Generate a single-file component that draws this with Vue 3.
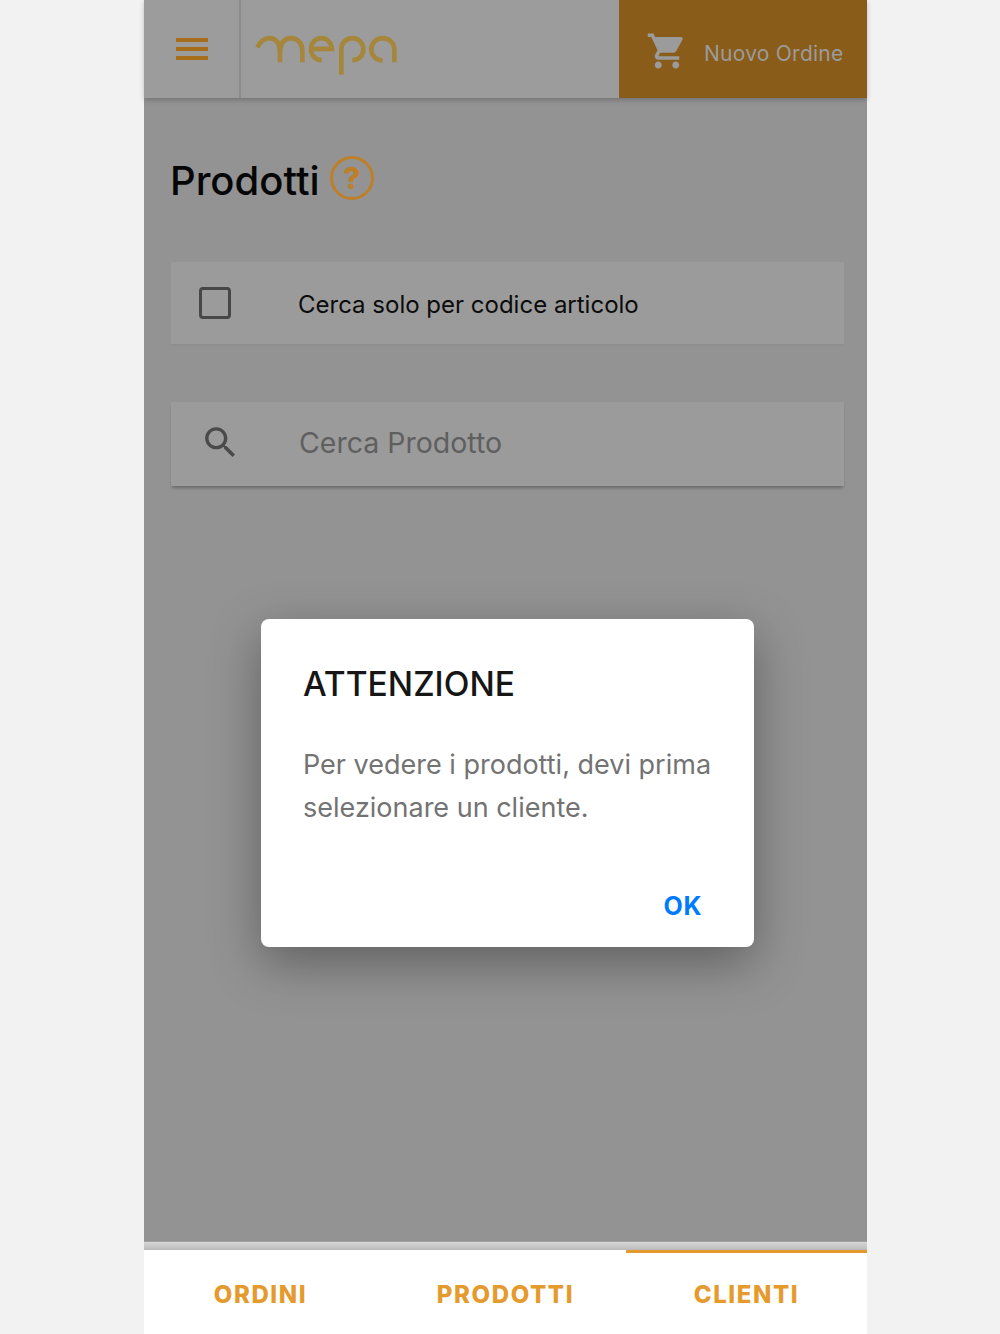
<script setup>
const tabs = [
  { label: 'ORDINI', active: false },
  { label: 'PRODOTTI', active: false },
  { label: 'CLIENTI', active: true },
];
</script>

<template>
  <div class="page">
    <div class="phone">
      <header class="topbar">
        <div class="menu-cell">
          <span class="bar"></span>
          <span class="bar"></span>
          <span class="bar"></span>
        </div>
        <div class="logo-cell">
          <svg class="logo" viewBox="330 105 432 122" width="144" height="41" fill="none" stroke="#a5863a" stroke-width="14">
            <path d="M340 142C350 122 362 114 376 114C396 114 408 130 408 150V186" />
            <path d="M408 150C408 130 422 114 441 114C461 114 475 130 475 150V186" />
            <path d="M504 146H564C562 126 548 114 532 114C514 114 501 129 501 147C501 165 514 180 533 180" />
            <path d="M592 224V147C592 129 606 114 625 114C644 114 658 129 658 147C658 166 644 180 625 180" />
            <path d="M751 186V148C751 129 736 114 716 114C697 114 682 129 682 148C682 167 697 181 716 181" />
          </svg>
        </div>
        <div class="order-btn">
          <svg class="cart" viewBox="0 0 24 24" width="42" height="42" fill="#9b9b9b">
            <path d="M7 18c-1.1 0-1.99.9-1.99 2S5.9 22 7 22s2-.9 2-2-.9-2-2-2zM1 2v2h2l3.6 7.59-1.35 2.45c-.16.28-.25.61-.25.96 0 1.1.9 2 2 2h12v-2H7.42c-.14 0-.25-.11-.25-.25l.03-.12.9-1.63h7.45c.75 0 1.41-.41 1.75-1.03l3.58-6.49c.08-.14.12-.31.12-.48 0-.55-.45-1-1-1H5.21l-.94-2H1zm16 16c-1.1 0-1.99.9-1.99 2s.89 2 1.99 2 2-.9 2-2-.9-2-2-2z" />
          </svg>
          <span class="order-label">Nuovo Ordine</span>
        </div>
      </header>

      <main class="content">
        <div class="title-row">
          <h1>Prodotti</h1>
          <span class="help">?</span>
        </div>

        <div class="card check-card">
          <span class="checkbox"></span>
          <span class="check-label">Cerca solo per codice articolo</span>
        </div>

        <div class="card search-card">
          <svg class="search" viewBox="0 0 24 24" width="41" height="41" fill="#4a4a4a">
            <path d="M15.5 14h-.79l-.28-.27C15.41 12.59 16 11.11 16 9.5 16 5.91 13.09 3 9.5 3S3 5.91 3 9.5 5.91 16 9.5 16c1.61 0 3.09-.59 4.23-1.57l.27.28v.79l5 4.99L20.49 19l-4.99-5zm-6 0C7.01 14 5 11.99 5 9.5S7.01 5 9.5 5 14 7.01 14 9.5 11.99 14 9.5 14z" />
          </svg>
          <input class="search-input" placeholder="Cerca Prodotto" />
        </div>
      </main>

      <div class="tab-strip"></div>
      <nav class="tabs">
        <div v-for="tab in tabs" :key="tab.label" class="tab" :class="{ active: tab.active }">
          {{ tab.label }}
        </div>
      </nav>

      <div class="overlay">
        <div class="dialog">
          <h2>ATTENZIONE</h2>
          <p>Per vedere i prodotti, devi prima selezionare un cliente.</p>
          <div class="actions">
            <button>OK</button>
          </div>
        </div>
      </div>
    </div>
  </div>
</template>

<style>
html, body {
  margin: 0;
  background: #f2f2f2;
}
</style>

<style scoped>
.page {
  display: flex;
  justify-content: center;
  height: 1334px;
  padding-left: 11px;
  overflow: hidden;
  font-family: Inter, "Liberation Sans", sans-serif;
}

.phone {
  position: relative;
  display: flex;
  flex-direction: column;
  width: 723px;
  height: 1334px;
  background: #939393;
}

.topbar {
  display: flex;
  flex: none;
  height: 98px;
  background: #9c9c9c;
  box-shadow: 0 2px 5px rgba(0, 0, 0, 0.22);
}

.menu-cell {
  display: flex;
  flex-direction: column;
  gap: 5px;
  width: 63px;
  padding: 38px 0 0 32px;
  box-sizing: content-box;
  border-right: 2px solid #8b8b8b;
}

.bar {
  display: block;
  width: 32px;
  height: 4px;
  background: #a86d1a;
}

.logo-cell {
  flex: 1;
  padding: 35px 0 0 13px;
}

.logo {
  display: block;
}

.order-btn {
  display: flex;
  align-items: center;
  width: 248px;
  padding-left: 27px;
  box-sizing: border-box;
  background: #8a5c1a;
  color: #9b9b9b;
  font-size: 21px;
  letter-spacing: 0.25px;
}

.cart {
  margin-right: 16px;
  margin-top: 4px;
}

.order-label {
  margin-top: 8px;
}

.content {
  flex: 1;
  padding: 0 23px 0 27px;
}

.title-row {
  display: flex;
  align-items: center;
  gap: 10px;
  height: 164px;
  margin-left: -1px;
}

h1 {
  margin: 0;
  font-size: 40px;
  font-weight: 500;
  color: #060606;
}

.help {
  display: flex;
  align-items: center;
  justify-content: center;
  width: 44px;
  height: 44px;
  margin-top: -4px;
  box-sizing: border-box;
  border: 3px solid #bd7f28;
  border-radius: 50%;
  color: #bd7f28;
  font-size: 30px;
  font-weight: 800;
}

.card {
  display: flex;
  align-items: center;
  background: #9b9b9b;
}

.check-card {
  height: 82px;
  margin-bottom: 56px;
  border-bottom: 2px solid #8f8f8f;
  box-sizing: content-box;
}

.checkbox {
  width: 32px;
  height: 32px;
  margin-left: 28px;
  box-sizing: border-box;
  border: 3.5px solid #474747;
  border-radius: 4px;
}

.check-label {
  margin: 2px 0 0 67px;
  font-size: 24px;
  color: #0b0b0b;
}

.search-card {
  height: 84px;
  padding-bottom: 4px;
  box-sizing: border-box;
  box-shadow: 0 3px 3px -1px rgba(0, 0, 0, 0.28);
}

.search {
  margin-left: 29px;
}

.search-input {
  flex: 1;
  min-width: 0;
  margin-left: 58px;
  padding: 0;
  border: none;
  outline: none;
  background: transparent;
  font-family: inherit;
  font-size: 28.5px;
}

.search-input::placeholder {
  color: #5f5f5f;
  opacity: 1;
}

.tab-strip {
  flex: none;
  height: 9px;
  background: linear-gradient(#d8d8d8, #bababa);
  border-top: 1px solid #a0a0a0;
  box-sizing: border-box;
}

.tabs {
  display: flex;
  flex: none;
  height: 84px;
  background: #fff;
}

.tab {
  position: relative;
  flex: 0 0 241px;
  box-sizing: border-box;
  display: flex;
  align-items: center;
  justify-content: center;
  padding-top: 4px;
  color: #e59a2e;
  font-size: 24px;
  font-weight: 800;
  letter-spacing: 1.6px;
}

.tab:first-child {
  padding-right: 8px;
}

.tab.active::before {
  content: "";
  position: absolute;
  top: 0;
  left: 0;
  right: 0;
  height: 3px;
  background: #e59a2e;
}

.overlay {
  position: absolute;
  top: 0;
  left: 0;
  padding: 619px 0 0 117px;
}

.dialog {
  width: 493px;
  height: 328px;
  padding: 44px 30px 0 42px;
  box-sizing: border-box;
  display: flex;
  flex-direction: column;
  border-radius: 8px;
  background: #fff;
  box-shadow: 0 16px 50px rgba(0, 0, 0, 0.35);
}

h2 {
  margin: 0 0 39px;
  font-size: 33.5px;
  line-height: 42px;
  font-weight: 500;
  color: #161616;
}

p {
  margin: 0;
  font-size: 27px;
  line-height: 42.5px;
  color: #737373;
}

.actions {
  display: flex;
  justify-content: flex-end;
  margin-top: auto;
  padding: 0 22px 26px 0;
}

button {
  padding: 0;
  border: none;
  background: none;
  color: #007aff;
  font-family: inherit;
  font-size: 25px;
  font-weight: 700;
  letter-spacing: 0.6px;
}
</style>
